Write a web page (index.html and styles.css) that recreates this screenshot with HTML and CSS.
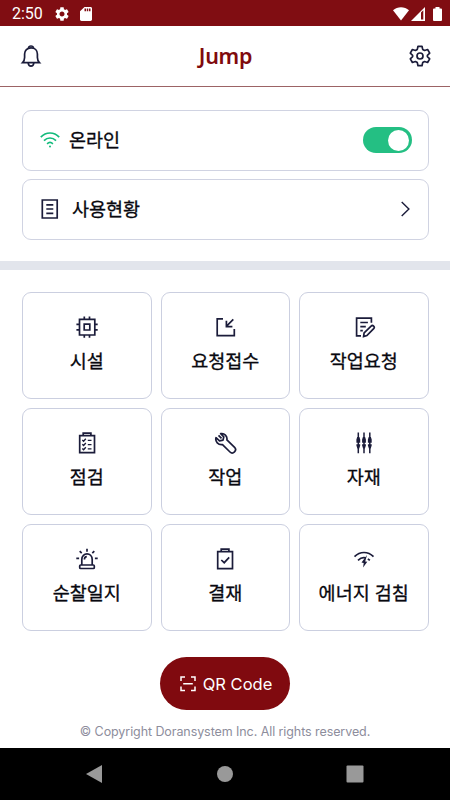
FILE: index.html
```html
<!DOCTYPE html>
<html lang="ko">

<head>
    <meta charset="UTF-8">
    <meta name="viewport" content="width=device-width, initial-scale=1.0">
    <title>Jump</title>
    <link rel="stylesheet" href="styles.css">
</head>
<body>
    <div class="status-bar">
        <span class="time">2:50</span>
        <svg class="status-gear" width="14" height="14" viewBox="2 2 20 20"><path fill="#fff" d="M19.14 12.94c.04-.3.06-.61.06-.94 0-.32-.02-.64-.07-.94l2.03-1.58c.18-.14.23-.41.12-.61l-1.92-3.32c-.12-.22-.37-.29-.59-.22l-2.39.96c-.5-.38-1.03-.7-1.62-.94l-.36-2.54c-.04-.24-.24-.41-.48-.41h-3.84c-.24 0-.43.17-.47.41l-.36 2.54c-.59.24-1.13.57-1.62.94l-2.39-.96c-.22-.08-.47 0-.59.22L2.74 8.87c-.12.21-.08.47.12.61l2.03 1.58c-.05.3-.09.63-.09.94s.02.64.07.94l-2.03 1.58c-.18.14-.23.41-.12.61l1.92 3.32c.12.22.37.29.59.22l2.39-.96c.5.38 1.03.7 1.62.94l.36 2.54c.05.24.24.41.48.41h3.84c.24 0 .44-.17.47-.41l.36-2.54c.59-.24 1.13-.56 1.62-.94l2.39.96c.22.08.47 0 .59-.22l1.92-3.32c.12-.22.07-.47-.12-.61l-2.01-1.58zM12 15.600c-1.980 0-3.600-1.620-3.600-3.600s1.620-3.600 3.600-3.600 3.600 1.620 3.600 3.600-1.620 3.600-3.600 3.600z"/></svg>
        <svg class="status-card" width="12" height="14" viewBox="4 2 16 20" preserveAspectRatio="none"><path fill="#fff" d="M18 2h-8L4 8v12c0 1.100.9 2 2 2h12c1.100 0 2-.9 2-2V4c0-1.100-.9-2-2-2zm-6 6h-2V4h2v4zm3 0h-2V4h2v4zm3 0h-2V4h2v4z"/></svg>
        <div class="signals">
            <svg width="16" height="14" viewBox="0 0 16 14"><path fill="#fff" d="M8 13.500L0 3.300C4.500-.8 11.500-.8 16 3.300z"/></svg>
            <svg width="14" height="14" viewBox="0 0 14 14"><path fill="#fff" d="M0 14L14 0V14z"/><path fill="#800d12" d="M10 5.500L12.300 3.200V12.500H10z"/></svg>
            <svg class="battery" width="9" height="14" viewBox="0 0 9 14"><path fill="#fff" d="M2.500 0h4v1.500H8q1 0 1 1V13q0 1-1 1H1q-1 0-1-1V2.500q0-1 1-1h1.500z"/></svg>
        </div>
    </div>

    <div class="header">
        <svg class="icon thick" viewBox="0 0 24 24"><path d="M3.600 18.600h16.800c-1.500-1.500-2-3-2-5v-3.500c0-3.700-2.600-6.300-6.400-6.300s-6.400 2.600-6.400 6.300v3.500c0 2-.5 3.500-2 5z"/><path d="M9.500 4C9.700 2.700 10.700 2 12 2s2.300.7 2.500 2M9.200 19c.2 2 1.300 3.200 2.800 3.200s2.600-1.200 2.800-3.200"/></svg>
        <h1>Jump</h1>
        <svg class="icon thick" viewBox="0 0 24 24"><circle cx="12" cy="12" r="3"/><path stroke-linejoin="round" d="M10 2.300h4l.7 3.100 1.900 1.100 3-1 2.100 3.700-2.300 2.100v1.400l2.300 2.100-2.100 3.700-3-1-1.900 1.100-.7 3.100h-4l-.7-3.100-1.900-1.100-3 1-2.100-3.700 2.300-2.100v-1.400L2.300 9.200l2.100-3.700 3 1 1.900-1.100z"/></svg>
    </div>

    <div class="settings">
        <div class="row">
            <svg class="wifi" width="20" height="16" viewBox="0 0 20 16"><path d="M.8 5.200C6-.4 14-.4 19.200 5.200M4 8.600c3.500-3.500 8.500-3.500 12 0M7.100 11.800c1.700-1.600 4.100-1.600 5.800 0"/><circle cx="10" cy="14.600" r="1"/></svg>
            <span class="online">온라인</span>
            <div class="toggle"><div class="knob"></div></div>
        </div>
        <div class="row">
            <svg class="list" width="18" height="20" viewBox="0 0 18 20"><path d="M1.300 1H16.200V19H1.300zM5.300 5.800h7M5.300 10h7M5.300 14.300h7"/></svg>
            <span class="usage">사용현황</span>
            <svg class="arrow" width="9" height="16" viewBox="0 0 9 16"><path d="M.7 1l7.200 7-7.200 7"/></svg>
        </div>
    </div>

    <div class="menu">
        <div class="card">
            <svg class="icon thick" viewBox="0 0 24 24"><path d="M4.500 4.300h15.300v15.700H4.500zM9.200 9.200h5.600v5.800H9.200zM9.300 1.500v3M14.500 1.500v3M9.300 20v2.700M14.500 20v2.700M1.400 9.400h3M1.400 14.800h3M20 9.400h2.700M20 14.800h2.700"/></svg>
            <span>시설</span>
        </div>
        <div class="card">
            <svg class="icon thick" viewBox="0 0 24 24"><path d="M10 3.900H4.200v16.700h17.100V14M20.300 4.300l-7 7M13.400 5.800v5.800h6"/></svg>
            <span>요청접수</span>
        </div>
        <div class="card">
            <svg class="icon thick" viewBox="0 0 24 24"><path d="M9 20.900H4.600V3.200h14.800v4.500M8.300 7.500h7.600M8.300 11.600h5.500M8.300 15.700h2.500M11.600 21.600l.5-3.800 7-6.700c1.700-1.600 4.200.8 2.600 2.500l-6.800 7z"/></svg>
            <span>작업요청</span>
        </div>
        <div class="card">
            <svg class="icon thick" viewBox="0 0 24 24"><path d="M4.700 4.600h14.800v17H4.700zM8.200 4.600V2.200h7.700v2.400"/><path d="M7.300 9l1.300 1.200 2.200-2.500M7.300 13.300l1.300 1.200L10.800 12M7.300 17.600l1.300 1.200 2.200-2.500M12.800 9.400h3.700M12.800 13.600h3.700M12.800 17.900h3.700" stroke-width="1.400"/></svg>
            <span>점검</span>
        </div>
        <div class="card">
            <svg class="icon thick" viewBox="0 0 24 24"><path d="M7.700 2.700c3.600-.8 6.900 2.300 6.200 6.200l7.700 7.500c2.900 3-1.700 7.400-4.600 4.600l-7.500-7.400c-4.200.7-7.600-2.900-6.500-6.900l3.500 3.200 3.500-.8.800-3.300zM5.500 4.300l3 3" stroke-linejoin="round"/></svg>
            <span>작업</span>
        </div>
        <div class="card">
            <svg class="icon" viewBox="0 0 24 24"><path d="M6.300 1.600V22.300M12 1.600V22.300M17.800 1.600V22.300"/><path class="solid" d="M5.200 6h2.200l.8 2.500v3.200H4.400V8.500zM10.900 6h2.200l.8 2.500v3.200h-3.800V8.500zM16.700 6h2.200l.8 2.500v3.200h-3.800V8.500zM4.400 13.300h3.800v1.200l-1 3H5.400l-1-3zM10.100 13.300h3.800v1.200l-1 3h-1.800l-1-3zM15.900 13.300h3.800v1.200l-1 3h-1.800l-1-3z"/></svg>
            <span>자재</span>
        </div>
        <div class="card">
            <svg class="icon thick" viewBox="0 0 24 24"><rect x="4.700" y="18" width="14.600" height="3.500" rx="1"/><path d="M6.800 18v-5.500c0-7.400 10.400-7.400 10.400 0V18M9.400 12.500c0-1.800 1-2.700 2.400-2.800M12 1.700v3M4.700 4.200l2 2M19.300 4.200l-2 2M1.300 11.300h2.800M19.900 11.300h2.800"/></svg>
            <span>순찰일지</span>
        </div>
        <div class="card">
            <svg class="icon thick" viewBox="0 0 24 24"><path d="M4.700 4.600h14.800v17H4.700zM8.200 4.600V2.200h7.700v2.400M8.300 13l2.900 2.700 5-5.300"/></svg>
            <span>결재</span>
        </div>
        <div class="card">
            <svg class="icon thick" viewBox="0 0 24 24"><path d="M2.500 9.600c5.500-5.500 13.500-5.500 19 0M6 13.300c2.700-2.600 5.400-3.100 7.700-2.400M15.800 11.900c.8.400 1.300.8 2.100 1.400"/><path class="solid" d="M15 8l-5.500 7.600 2.200.3-.6 4.500 4.200-5.600-2.100-.3z"/></svg>
            <span>에너지 검침</span>
        </div>
    </div>

    <div class="footer">
        <button class="qr">
            <svg width="16" height="16" viewBox="0 0 16 16"><path d="M5 1H1v4M11 1h4v4M5 14.600H1v-4M11 14.600h4v-4M3.200 7.800h9.600"/></svg>
            QR Code
        </button>
        <p class="copyright">© Copyright Doransystem Inc. All rights reserved.</p>
    </div>

    <div class="nav-bar">
        <svg width="18" height="20" viewBox="0 0 18 20"><path fill="#999" d="M16 1v18L0 10z"/></svg>
        <svg width="18" height="18" viewBox="0 0 18 18"><circle cx="9" cy="9" r="8" fill="#999"/></svg>
        <svg width="18" height="18" viewBox="0 0 18 18"><rect x=".5" y=".5" width="17" height="17" rx="1" fill="#999"/></svg>
    </div>
</body>
</html>
```
FILE: styles.css
```css
* {
    box-sizing: border-box;
}
body {
    font-family: "Noto Sans CJK KR", sans-serif;
    margin: 0;
    height: 800px;
    display: flex;
    flex-direction: column;
    background: #fff;
    color: #08080f;
    overflow: hidden;
}
svg {
    display: block;
    flex: none;
}
.status-bar {
    height: 26px;
    background: #800d12;
    color: #fff;
    display: flex;
    align-items: center;
    padding: 1px 8px 0 12px;
}
.time {
    font: 16px/20px Roboto, sans-serif;
    width: 31px;
    padding-top: 1px;
}
.status-gear {
    margin-left: 12px;
}
.status-card {
    margin-left: 11px;
}
.signals {
    display: flex;
    margin-left: auto;
    gap: 2px;
}
.battery {
    margin-left: 6px;
}
.header {
    height: 61px;
    border-bottom: 1px solid #9c6365;
    display: flex;
    justify-content: space-between;
    align-items: center;
    padding: 0 18px 0 19px;
}
.header h1 {
    margin: 0 0 2px;
    font: 600 21.500px "Noto Sans", sans-serif;
    color: #800a0e;
    letter-spacing: -0.300px;
}
.icon {
    width: 24px;
    height: 24px;
    fill: none;
    stroke: #1b1c3a;
    stroke-width: 1.500;
}
.thick {
    stroke-width: 1.700;
}
.icon .solid {
    fill: #1b1c3a;
    stroke: none;
}
.settings {
    height: 183px;
    padding: 23px 21px 0 22px;
    border-bottom: 9px solid #e2e5ec;
    display: flex;
    flex-direction: column;
    gap: 8px;
}
.row {
    height: 61px;
    border: 1px solid #d0d3e2;
    border-radius: 9px;
    display: flex;
    align-items: center;
    padding: 0 16px 1px 17px;
    font-size: 18.500px;
    -webkit-text-stroke: 0.300px;
}
.row span {
    padding-bottom: 2px;
}
.row svg {
    fill: none;
    stroke: #1b1c3a;
    stroke-width: 1.700;
}
.row .wifi {
    stroke: #13bb7c;
}
.wifi circle {
    fill: #13bb7c;
    stroke: none;
}
.row .list {
    margin-left: 1px;
}
.online {
    margin-left: 9px;
}
.usage {
    margin-left: 13px;
}
.toggle {
    width: 49px;
    height: 26px;
    margin-left: auto;
    border-radius: 13px;
    background: #24bf83;
    display: flex;
    align-items: center;
    justify-content: flex-end;
    padding-right: 3px;
}
.knob {
    width: 21px;
    height: 21px;
    border-radius: 50%;
    background: #fff;
}
.row .arrow {
    margin-left: auto;
    margin-right: 2px;
    stroke-width: 1.400;
}
.menu {
    display: grid;
    grid-template-columns: repeat(3, 129.500px);
    grid-auto-rows: 107px;
    gap: 9px;
    padding: 22px 22px 0;
}
.card {
    border: 1px solid #cbcfe0;
    border-radius: 9px;
    display: flex;
    flex-direction: column;
    align-items: center;
    padding-top: 22px;
    font-size: 18.500px;
    -webkit-text-stroke: 0.300px;
}
.card span {
    line-height: 28px;
    margin-top: 7px;
}
.footer {
    height: 117px;
    padding-top: 26px;
    display: flex;
    flex-direction: column;
    align-items: center;
}
.qr {
    width: 130px;
    height: 53px;
    padding: 0 0 0 2px;
    border: 0;
    border-radius: 27px;
    background: #800a0f;
    color: #fff;
    font: 16.500px Inter, sans-serif;
    display: flex;
    align-items: center;
    justify-content: center;
    gap: 7px;
}
.qr svg {
    fill: none;
    stroke: #fff;
    stroke-width: 1.500;
}
.copyright {
    margin: 14px 0 0;
    font: 12.500px/16px Inter, sans-serif;
    letter-spacing: -0.080px;
    color: #8d8d9c;
}
.nav-bar {
    height: 52px;
    background: #000;
    display: flex;
    align-items: center;
    justify-content: space-between;
    padding: 0 86px;
}
```
